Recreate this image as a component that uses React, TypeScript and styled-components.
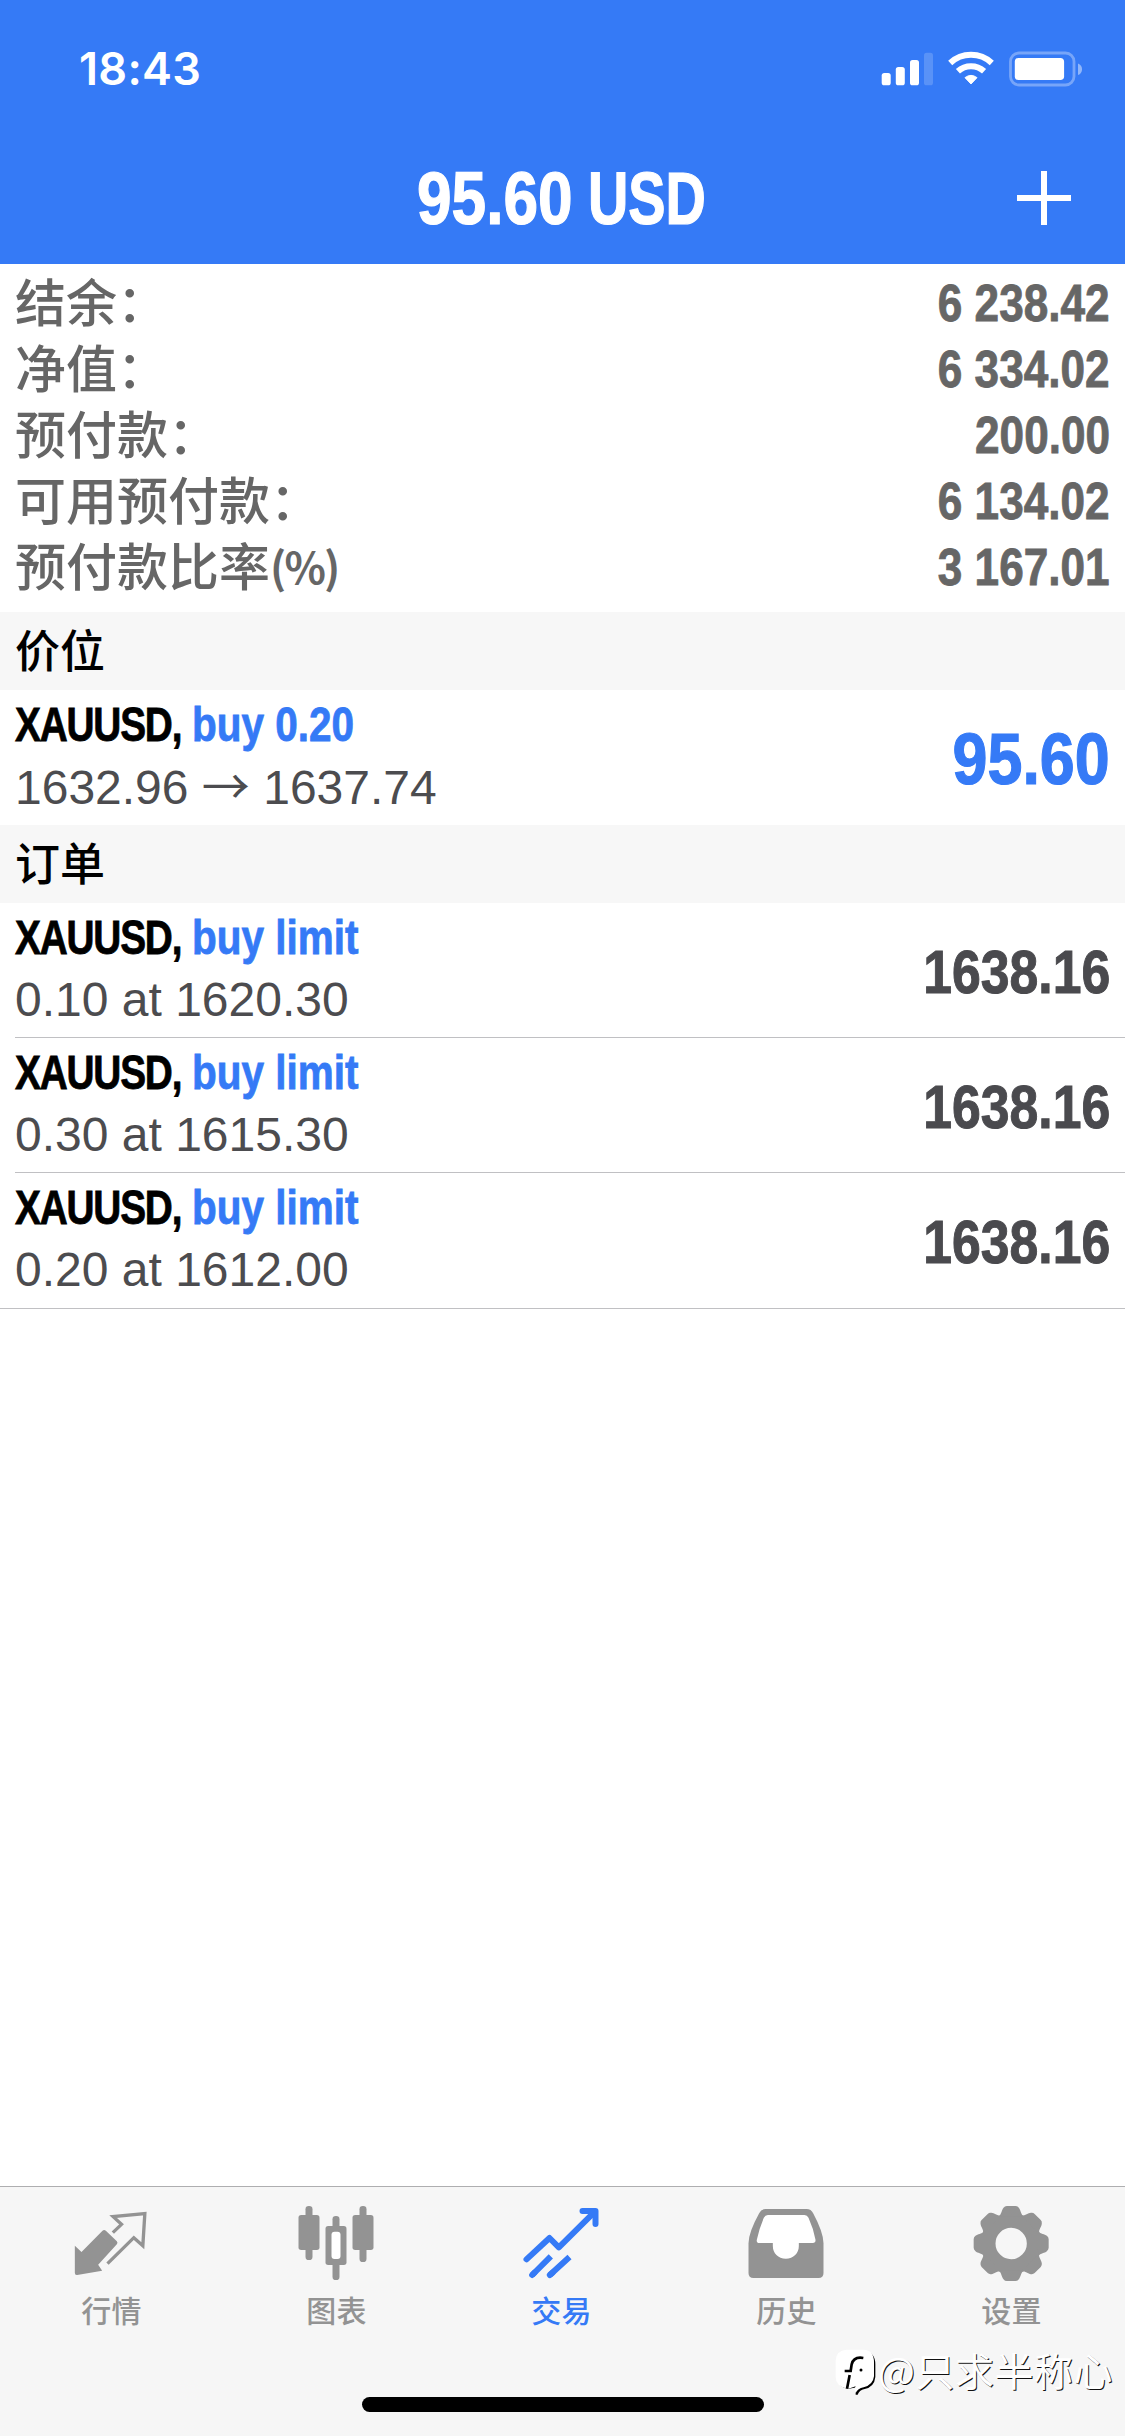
import React from "react";
import styled, { createGlobalStyle } from "styled-components";

const latin = `"Liberation Sans", "Noto Sans CJK SC", sans-serif`;
const cjk = `"Noto Sans CJK SC", sans-serif`;
const blue = "#357af6";

const Global = createGlobalStyle`
  * { box-sizing: border-box; }
  body { margin: 0; background: #fff; font-family: ${latin}; }
`;

const Screen = styled.main`
  width: 1125px;
  height: 2436px;
  display: flex;
  flex-direction: column;
  background: #fff;
  position: relative;
  overflow: hidden;
`;

const Header = styled.header`
  height: 264px;
  flex: none;
  background: ${blue};
  color: #fff;
`;

const StatusBar = styled.div`
  height: 132px;
  padding: 6px 42px 0 79px;
  display: flex;
  align-items: center;
  justify-content: space-between;
`;

const Clock = styled.span`
  font: 600 45px/60px Inter, sans-serif;
  letter-spacing: 0.3px;
`;

const StatusIcons = styled.svg`
  width: 204px;
  height: 36px;
`;

const NavBar = styled.div`
  height: 132px;
  padding: 0 54px;
  display: grid;
  grid-template-columns: 54px 1fr 54px;
  align-items: center;
`;

/* Condensed bold face: regular-width glyphs squeezed horizontally. */
const Condensed = styled.span<{
  $size: number;
  $squeeze: number;
  $origin?: string;
  $color?: string;
  $spacing?: number;
}>`
  display: block;
  white-space: pre;
  font-weight: 700;
  font-size: ${(p) => p.$size}px;
  line-height: 1.15;
  letter-spacing: ${(p) => p.$spacing ?? 0}px;
  color: ${(p) => p.$color ?? "inherit"};
  -webkit-text-stroke: ${(p) => p.$size / 60}px currentColor;
  transform: scaleX(${(p) => p.$squeeze});
  transform-origin: ${(p) => p.$origin ?? "left"} center;
`;

const Title = styled.h1`
  grid-column: 2;
  width: 292px;
  margin: 0 auto;
  padding: 2px 0 0;
  display: grid;
  grid-template-columns: 171px 121px;
  justify-items: start;
`;

const PlusIcon = styled.svg`
  width: 54px;
  height: 54px;
`;

const Summary = styled.section`
  height: 348px;
  flex: none;
  padding: 6px 15px 0;
  color: #666;
`;

const SummaryRow = styled.div`
  height: 66px;
  display: flex;
  justify-content: space-between;
`;

const SummaryLabel = styled.span`
  font: 500 51px/60px ${cjk};
  white-space: nowrap;
`;

const SummaryValue = styled.div`
  padding-top: 5px;
`;

const Unit = styled.span`
  font-size: 43px;
  font-weight: 700;
  letter-spacing: -1.8px;
  vertical-align: 2px;
  line-height: 1;
`;

const SectionTitle = styled.h2`
  height: 78px;
  flex: none;
  margin: 0;
  padding-left: 15px;
  background: #f7f7f7;
  color: #000;
  font: 500 45px/74px ${cjk};
`;

const TradeList = styled.ul`
  margin: 0;
  padding: 0;
  list-style: none;
  flex: none;
`;

const TradeRow = styled.li<{ $line?: "inset" | "full" }>`
  height: ${(p) => (p.$line === "full" ? 136 : 135)}px;
  padding: 0 15px 0 0;
  margin-left: ${(p) => (p.$line === "inset" ? 15 : 0)}px;
  padding-left: ${(p) => (p.$line === "inset" ? 0 : 15)}px;
  border-bottom: ${(p) => (p.$line ? "1px solid #c0c0c3" : "0")};
  display: flex;
  justify-content: space-between;
`;

const TradeInfo = styled.div`
  height: 135px;
  padding-top: 7px;
`;

const TradeName = styled.div`
  height: 55px;
  display: grid;
  grid-template-columns: 177px auto;
`;

const TradeDetail = styled.div`
  height: 55px;
  margin-top: 7px;
  font-size: 48px;
  line-height: 55px;
  color: #4c4c4f;
  white-space: pre;
`;

const Arrow = styled.span`
  font-family: ${cjk};
  line-height: 1;
`;

const TradeValue = styled.div`
  height: 135px;
  padding-top: 3px;
  display: flex;
  align-items: center;
`;

const Empty = styled.div`
  flex: 1;
`;

const TabBar = styled.nav`
  height: 250px;
  flex: none;
  border-top: 1px solid #aeaeb0;
  background: #f6f6f6;
  display: flex;
  flex-direction: column;
  align-items: center;
`;

const Tabs = styled.div`
  width: 100%;
  height: 210px;
  padding-top: 13px;
  display: grid;
  grid-template-columns: repeat(5, 1fr);
`;

const Tab = styled.div<{ $active?: boolean }>`
  display: flex;
  flex-direction: column;
  align-items: center;
  color: ${(p) => (p.$active ? blue : "#939393")};
`;

const TabIcon = styled.svg`
  width: 80px;
  height: 84px;
  margin-right: 1px;
`;

const TabLabel = styled.span`
  margin: 3px 2px 0 0;
  font: 500 30px/44px ${cjk};
  letter-spacing: 0.3px;
`;

const HomeIndicator = styled.div`
  width: 402px;
  height: 15px;
  border-radius: 8px;
  background: #000;
`;

const Watermark = styled.div`
  position: absolute;
  left: 835px;
  top: 2341px;
  height: 56px;
  display: flex;
  align-items: center;
  font: 400 39px/56px ${cjk};
  letter-spacing: 0.5px;
  color: #fff;
  white-space: nowrap;
  text-shadow: 1px 1px 0 #111;
`;

const WatermarkLogo = styled.svg`
  width: 43px;
  height: 48px;
  margin: 6px 0 0 0;
`;

const summary = [
  ["结余：", "6 238.42"],
  ["净值：", "6 334.02"],
  ["预付款：", "200.00"],
  ["可用预付款：", "6 134.02"],
  ["预付款比率", "3 167.01"],
];

const orders = [
  { detail: "0.10 at 1620.30", price: "1638.16" },
  { detail: "0.30 at 1615.30", price: "1638.16" },
  { detail: "0.20 at 1612.00", price: "1638.16" },
];

function Trade({
  side,
  detail,
  line,
  children,
}: {
  side: string;
  detail: React.ReactNode;
  line?: "inset" | "full";
  children: React.ReactNode;
}) {
  return (
    <TradeRow $line={line}>
      <TradeInfo>
        <TradeName>
          <Condensed $size={48.5} $squeeze={0.8} $color="#000" $spacing={-1.5}>
            XAUUSD,
          </Condensed>
          <Condensed $size={48.5} $squeeze={0.835} $color={blue}>
            {side}
          </Condensed>
        </TradeName>
        <TradeDetail>{detail}</TradeDetail>
      </TradeInfo>
      <TradeValue>{children}</TradeValue>
    </TradeRow>
  );
}

function QuotesIcon() {
  return (
    <TabIcon viewBox="217.5 90 240 252" fill="currentColor">
      <path d="M226 227 L246 246 L309 182 Q314 178 319 182 L352 214 Q356 219 352 223 L296 284 L308 302 L233 315 Q226 316 226 308Z" />
      <path
        d="M340 188 L366 163 L341 140 L436 131 L430 227 L403 203 L324 281"
        fill="none"
        stroke="currentColor"
        strokeWidth="10"
      />
    </TabIcon>
  );
}

function ChartIcon() {
  return (
    <TabIcon viewBox="892.5 90 240 252" fill="currentColor">
      <rect x="918" y="108" width="21" height="162" rx="10" />
      <rect x="897" y="135" width="63" height="105" rx="8" />
      <rect x="999" y="138" width="21" height="192" rx="10" />
      <rect x="978" y="168" width="63" height="117" rx="8" />
      <rect x="996" y="185" width="27" height="82" rx="9" fill="#fff" />
      <rect x="1080" y="108" width="21" height="168" rx="10" />
      <rect x="1059" y="135" width="63" height="105" rx="8" />
    </TabIcon>
  );
}

function TradeIcon() {
  return (
    <TabIcon
      viewBox="367.5 90 240 252"
      fill="none"
      stroke="currentColor"
      strokeWidth="18"
      strokeLinecap="round"
      strokeLinejoin="round"
    >
      <path d="M381 268 L450 204 L478 232 L586 125" />
      <path d="M549 123 H588 V162" />
      <path d="M398 315 L405 308 M451 315 L459 308" />
      <path d="M398 315 L454 259 M451 315 L510 261" strokeLinecap="butt" />
    </TabIcon>
  );
}

function HistoryIcon() {
  return (
    <TabIcon viewBox="142.5 90 240 252">
      <path
        fill="currentColor"
        d="M198 117 H321 Q335 117 341 130 Q372 188 372 220 V309 Q372 324 357 324 H162 Q147 324 147 309 V220 Q147 188 179 130 Q185 117 198 117Z"
      />
      <path
        fill="#fff"
        d="M205 135 H315 Q323 135 327 143 Q342 176 348 209 Q349 219 340 219 H298 V228 C298 250 282 266 259 266 C236 266 220 250 220 228 V219 H180 Q170 219 172 209 Q179 176 193 143 Q197 135 205 135Z"
      />
    </TabIcon>
  );
}

function SettingsIcon() {
  return (
    <TabIcon viewBox="817.5 90 240 252" fill="currentColor">
      <g transform="translate(935 220.5)">
        <circle r="69" fill="none" stroke="currentColor" strokeWidth="44" />
        {[0, 45, 90, 135, 180, 225, 270, 315].map((angle) => (
          <path
            key={angle}
            transform={`rotate(${angle})`}
            d="M-37 -80 C-28 -90 -29 -100 -23 -107 Q-19 -112.5 -13 -112.5 H13 Q19 -112.5 23 -107 C29 -100 28 -90 37 -80Z"
          />
        ))}
      </g>
    </TabIcon>
  );
}

const tabs = [
  { label: "行情", Icon: QuotesIcon },
  { label: "图表", Icon: ChartIcon },
  { label: "交易", Icon: TradeIcon, active: true },
  { label: "历史", Icon: HistoryIcon },
  { label: "设置", Icon: SettingsIcon },
];

export default function App() {
  return (
    <Screen>
      <Global />
      <Header>
        <StatusBar>
          <Clock>18:43</Clock>
          <StatusIcons viewBox="879 51 204 36" fill="#fff">
            <rect x="881.7" y="73" width="9" height="12.3" rx="2.6" />
            <rect x="895.8" y="67" width="9" height="18.3" rx="2.6" />
            <rect x="910" y="60" width="9" height="25.3" rx="2.6" />
            <rect x="924" y="52.7" width="9" height="32.6" rx="2.6" opacity=".18" />
            <g transform="translate(971 85.3) scale(.3333)" fill="none" stroke="#fff">
              <path d="M-62.4 -66.9 A91.5 91.5 0 0 1 62.4 -66.9" strokeWidth="18" />
              <path d="M-39.2 -42 A57.5 57.5 0 0 1 39.2 -42" strokeWidth="18" />
              <path d="M0 -4 L-18 -23 A30 30 0 0 1 18 -23Z" fill="#fff" strokeWidth="3" strokeLinejoin="round" />
            </g>
            <rect x="1010.5" y="53" width="63.5" height="32" rx="8.5" fill="none" stroke="#fff" strokeWidth="2.8" opacity=".33" />
            <rect x="1014.8" y="58" width="49.3" height="22" rx="3.8" />
            <path d="M1078 63.5 Q1082 65 1082 69.2 Q1082 73.5 1078 75Z" opacity=".45" />
          </StatusIcons>
        </StatusBar>
        <NavBar>
          <Title>
            <Condensed $size={74.5} $squeeze={0.835}>
              95.60
            </Condensed>
            <Condensed $size={74.5} $squeeze={0.75}>
              USD
            </Condensed>
          </Title>
          <PlusIcon viewBox="0 0 54 54" fill="#fff">
            <path d="M24 0h6v24h24v6H30v24h-6V30H0v-6h24z" />
          </PlusIcon>
        </NavBar>
      </Header>

      <Summary>
        {summary.map(([label, value], i) => (
          <SummaryRow key={label}>
            <SummaryLabel>
              {label}
              {i === 4 && <Unit>(%)</Unit>}
            </SummaryLabel>
            <SummaryValue>
              <Condensed $size={51} $squeeze={0.865} $origin="right">
                {value}
              </Condensed>
            </SummaryValue>
          </SummaryRow>
        ))}
      </Summary>

      <SectionTitle>价位</SectionTitle>
      <TradeList>
        <Trade
          side="buy 0.20"
          detail={
            <>
              1632.96 <Arrow>→</Arrow> 1637.74
            </>
          }
        >
          <Condensed $size={73} $squeeze={0.86} $origin="right" $color={blue}>
            95.60
          </Condensed>
        </Trade>
      </TradeList>

      <SectionTitle>订单</SectionTitle>
      <TradeList>
        {orders.map((order, i) => (
          <Trade
            key={order.detail}
            side="buy limit"
            detail={order.detail}
            line={i === orders.length - 1 ? "full" : "inset"}
          >
            <Condensed $size={61.5} $squeeze={0.842} $origin="right" $color="#4a4a4e">
              {order.price}
            </Condensed>
          </Trade>
        ))}
      </TradeList>

      <Empty />

      <TabBar>
        <Tabs>
          {tabs.map(({ label, Icon, active }) => (
            <Tab key={label} $active={active}>
              <Icon />
              <TabLabel>{label}</TabLabel>
            </Tab>
          ))}
        </Tabs>
        <HomeIndicator />
      </TabBar>

      <Watermark>
        <WatermarkLogo viewBox="28 35 129 144">
          <path
            fill="#000"
            d="M62 46 H118 Q149 48 149 84 V122 Q146 152 117 158 Q100 162 96 175 H90 Q88 160 98 152 L66 158 Q34 150 34 122 V78 Q34 48 62 46Z"
          />
          <path
            fill="#fff"
            d="M62 40 H114 Q145 42 145 78 V120 Q142 146 114 153 Q96 157 90 170 Q84 160 90 150 L66 158 Q30 150 30 122 V72 Q32 42 62 40Z"
          />
          <path d="M113 65 Q84 60 78 84 L75 104 H57 M72 116 L64 157" fill="none" stroke="#000" strokeWidth="8" />
          <circle cx="106" cy="101" r="4.5" fill="#000" />
        </WatermarkLogo>
        @只求半称心
      </Watermark>
    </Screen>
  );
}
